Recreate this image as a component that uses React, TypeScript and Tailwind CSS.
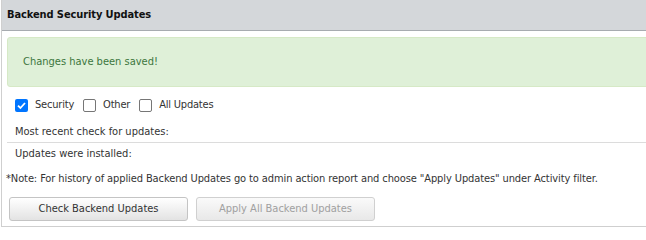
import React from "react";

const font = { fontFamily: '"DejaVu Sans Condensed", "DejaVu Sans", sans-serif' };

function Check({ checked, label }: { checked?: boolean; label: string }) {
  return (
    <label className="flex items-center">
      {checked ? (
        <span className="w-[13px] h-[13px] rounded-[2px] bg-[#0075ff] flex items-center justify-center">
          <svg width="11" height="11" viewBox="0 0 11 11">
            <path d="M2 5.6 L4.4 8 L9 3" fill="none" stroke="white" strokeWidth="1.8" />
          </svg>
        </span>
      ) : (
        <span className="w-[13px] h-[13px] rounded-[2px] border border-[#767676] bg-white" />
      )}
      <span className="ml-[7px] text-[11px] text-[#333] tracking-[-0.2px]">{label}</span>
    </label>
  );
}

export default function App() {
  return (
    <div className="w-[646px] h-[228px] bg-white overflow-hidden" style={font}>
      <div className="ml-[1px] border-l border-b border-[#cfcfcf] h-[227px] flex flex-col">
        <div className="h-[31px] bg-[#d4d7da] border-b-[1.5px] border-[#a7abb0] flex items-center pl-[5px]">
          <span className="text-[11px] font-bold text-[#111] tracking-[-0.1px]">Backend Security Updates</span>
        </div>
        <div className="pl-[5px]">
          <div className="mt-[6px] h-[50px] bg-[#dff0d8] border border-[#d6e9c6] rounded-l-[3px] flex items-center pl-[15px] -mr-[4px]">
            <span className="text-[11px] text-[#3c763d]">Changes have been saved!</span>
          </div>
          <div className="flex items-center gap-[9px] pl-[8px] mt-[10px] h-[16px]">
            <Check checked label="Security" />
            <Check label="Other" />
            <Check label="All Updates" />
          </div>
          <div className="pl-[8px] mt-[10px] h-[19px] flex items-center text-[11px] text-[#333]">
            Most recent check for updates:
          </div>
          <div className="border-b border-[#dcdcdc]" />
          <div className="pl-[8px] h-[22px] flex items-center text-[11px] text-[#333]">
            Updates were installed:
          </div>
          <div className="-ml-[1px] mt-[4px] h-[20px] flex items-center text-[11px] text-[#333] whitespace-nowrap tracking-[-0.1px]">
            *Note: For history of applied Backend Updates go to admin action report and choose "Apply Updates" under Activity filter.
          </div>
          <div className="flex gap-[8px] mt-[8px] ml-[2px]">
            <button className="w-[179px] h-[24px] rounded-[3px] border border-[#c4c4c4] bg-gradient-to-b from-[#ffffff] to-[#e3e3e3] text-[11px] text-[#333]">
              Check Backend Updates
            </button>
            <button className="w-[179px] h-[24px] rounded-[3px] border border-[#d0d0d0] bg-gradient-to-b from-[#fafafa] to-[#e8e8e8] text-[11px] text-[#a0a0a0]">
              Apply All Backend Updates
            </button>
          </div>
        </div>
      </div>
    </div>
  );
}
